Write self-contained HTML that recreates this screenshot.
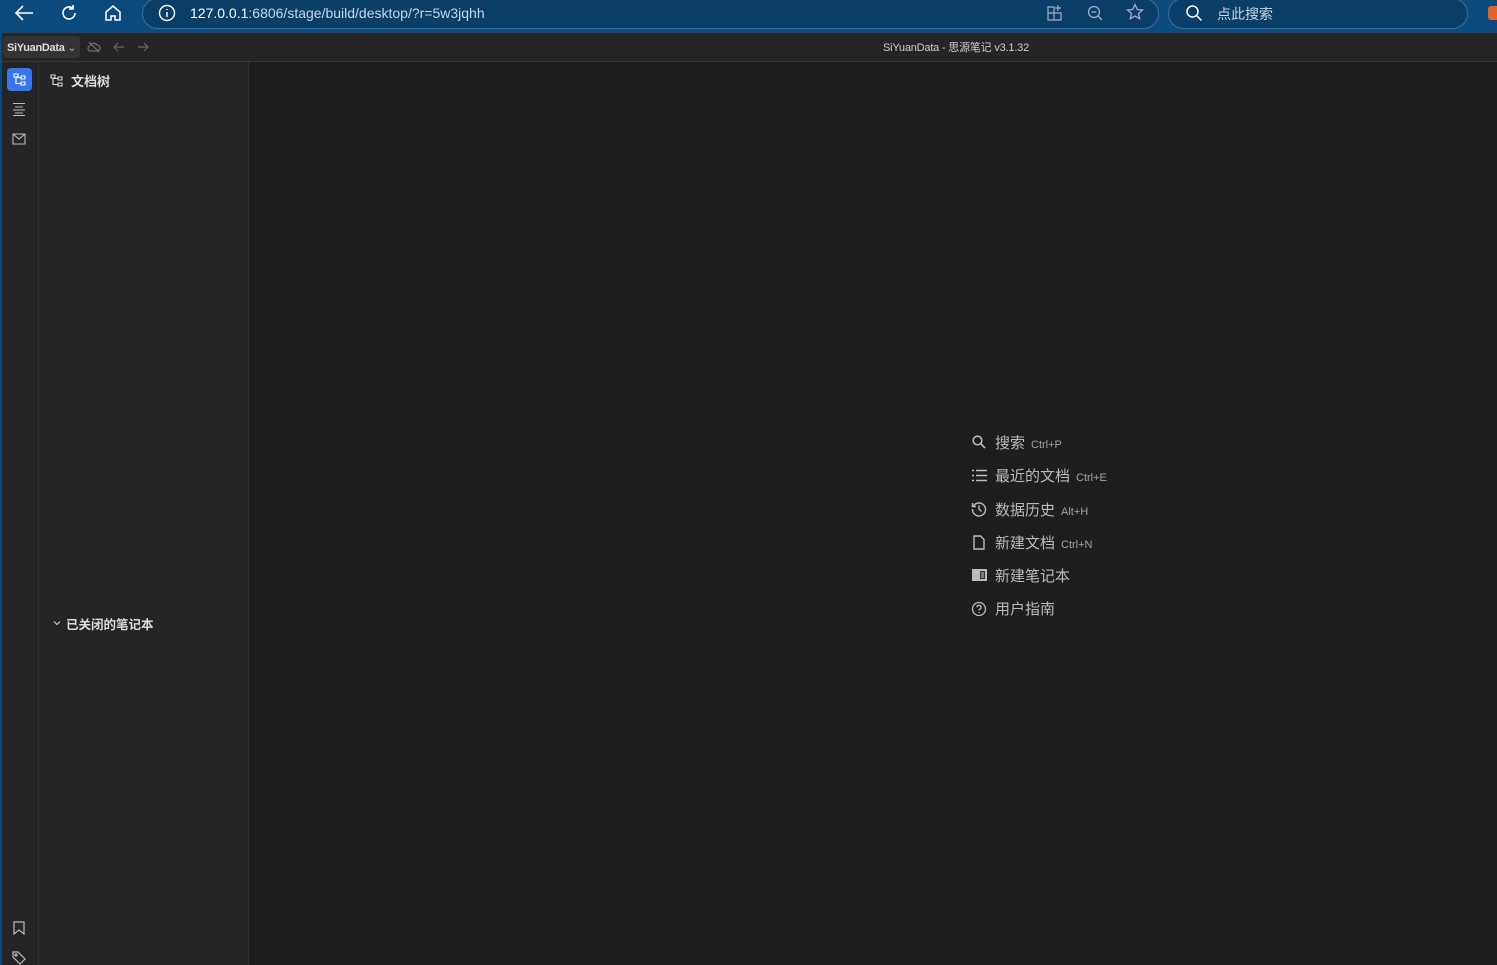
<!DOCTYPE html><html><head><meta charset="utf-8"><style>
*{box-sizing:border-box;margin:0;padding:0}
body{width:1497px;height:965px;overflow:hidden;background:#1e1e1e;font-family:"Liberation Sans","Noto Sans CJK SC",sans-serif;position:relative}
.abs{position:absolute}
.chrome{left:0;top:0;width:1497px;height:33px;background:#0b4a7c}
.url{left:142px;top:-2px;width:1017px;height:31px;border:1px solid #3a6f9a;border-radius:16px;background:#093e68}
.srch{left:1168px;top:-2px;width:300px;height:31px;border:1px solid #3a6f9a;border-radius:16px;background:#093e68}
.tb{left:0;top:33px;width:1497px;height:29px;background:#252525;border-bottom:1px solid #3a3a3a;border-left:2px solid #0b4a7c}
.dock{left:0;top:62px;width:39px;height:903px;background:#252525;border-left:2px solid #0b4a7c;border-right:1px solid #333}
.tree{left:39px;top:62px;width:210px;height:903px;background:#252525;border-right:1px solid #333}
.t{color:#ddd;font-size:12px;white-space:nowrap}
.m{color:#b8babd;font-size:15px;white-space:nowrap}
.k{color:#a0a2a5;font-size:11px;margin-left:6px}
svg{position:absolute}
</style></head><body>
<div class="abs chrome"></div>
<svg style="left:13px;top:4px" width="22" height="18" viewBox="0 0 22 18" fill="none" stroke="#fff" stroke-width="1.6"><path d="M20 9H3M10 2 3 9l7 7"/></svg>
<svg style="left:59px;top:3px" width="20" height="20" viewBox="0 0 20 20" fill="none" stroke="#fff" stroke-width="1.6"><path d="M16 10a6 6 0 1 1-2-4.5M14 2v4h-4"/></svg>
<svg style="left:103px;top:3px" width="20" height="20" viewBox="0 0 20 20" fill="none" stroke="#fff" stroke-width="1.5"><path d="M3 9 10 3l7 6v8h-5v-4H8v4H3z"/></svg>
<div class="abs url"></div>
<svg style="left:158px;top:4px" width="18" height="18" viewBox="0 0 18 18" fill="none" stroke="#fff" stroke-width="1.4"><circle cx="9" cy="9" r="7.5"/><path d="M9 8v5M9 5v1"/></svg>
<div class="abs" style="left:190px;top:5px;font-size:14px;color:#fff">127.0.0.1<span style="color:#c9d6e2">:6806/stage/build/desktop/?r=5w3jqhh</span></div>
<svg style="left:1046px;top:4px" width="18" height="18" viewBox="0 0 18 18" fill="none" stroke="#aac" stroke-width="1.2"><path d="M2 3h6v13H2zM2 9h13v7H8M12 1v6M9 4h6"/></svg>
<svg style="left:1086px;top:4px" width="18" height="18" viewBox="0 0 18 18" fill="none" stroke="#aac" stroke-width="1.3"><circle cx="8" cy="8" r="5.5"/><path d="M12 12l4 4M5.5 8h5"/></svg>
<svg style="left:1126px;top:3px" width="18" height="18" viewBox="0 0 18 18" fill="none" stroke="#aac" stroke-width="1.3"><path d="M9 1.5l2.3 5 5.2.5-4 3.5 1.2 5.2L9 13l-4.7 2.7 1.2-5.2-4-3.5 5.2-.5z"/></svg>
<div class="abs srch"></div>
<svg style="left:1185px;top:4px" width="18" height="18" viewBox="0 0 18 18" fill="none" stroke="#fff" stroke-width="1.5"><circle cx="7.5" cy="7.5" r="5.5"/><path d="M11.5 11.5l5 5"/></svg>
<div class="abs" style="left:1217px;top:4px;font-size:14px;color:#c9d6e2">点此搜索</div>
<div class="abs" style="left:1488px;top:6px;width:9px;height:14px;background:#e5622a;border-radius:3px 0 0 3px"></div>
<div class="abs tb"></div>
<div class="abs" style="left:3px;top:36px;width:77px;height:22px;background:#333;border-radius:4px"></div>
<div class="abs t" style="left:7px;top:41px;font-size:11px;font-weight:bold;color:#ddd;letter-spacing:-0.3px">SiYuanData <span style="font-weight:normal;color:#aaa">⌄</span></div>
<svg style="left:87px;top:40px" width="14" height="14" viewBox="0 0 14 14" fill="none" stroke="#777" stroke-width="1.1"><path d="M4 11h6a3 3 0 0 0 0-6 4 4 0 0 0-7 1 2.5 2.5 0 0 0 1 5zM2 2l10 10"/></svg>
<svg style="left:112px;top:40px" width="14" height="14" viewBox="0 0 14 14" fill="none" stroke="#666" stroke-width="1.2"><path d="M12 7H2M6 3 2 7l4 4"/></svg>
<svg style="left:136px;top:40px" width="14" height="14" viewBox="0 0 14 14" fill="none" stroke="#666" stroke-width="1.2"><path d="M2 7h10M8 3l4 4-4 4"/></svg>
<div class="abs t" style="left:883px;top:39px;font-size:11px;color:#ccc;letter-spacing:-0.2px">SiYuanData - 思源笔记 v3.1.32</div>
<div class="abs dock"></div>
<div class="abs" style="left:7px;top:68px;width:25px;height:23px;background:#3575f0;border-radius:4px"></div>
<svg style="left:13px;top:73px" width="13" height="13" viewBox="0 0 13 13" fill="none" stroke="#fff" stroke-width="1.1"><path d="M1 1h4v3H1zM8 3h4v3H8zM8 9h4v3H8zM3 4v6.5h5M3 4.5h5"/></svg>
<svg style="left:12px;top:102px" width="14" height="14" viewBox="0 0 14 14" fill="none" stroke="#bbb" stroke-width="1.1"><path d="M1 1.5h12M3 5h8M1 8h12M3 11h8M1 13.5h12"/></svg>
<svg style="left:12px;top:133px" width="14" height="12" viewBox="0 0 14 12" fill="none" stroke="#bbb" stroke-width="1.1"><path d="M1 1h12v10H1zM1 1l6 5 6-5"/></svg>
<svg style="left:13px;top:921px" width="12" height="14" viewBox="0 0 12 14" fill="none" stroke="#bbb" stroke-width="1.2"><path d="M1 1h10v12L6 9l-5 4z"/></svg>
<svg style="left:12px;top:951px" width="14" height="14" viewBox="0 0 14 14" fill="none" stroke="#bbb" stroke-width="1.2"><path d="M1 1h5l7 7-5 5-7-7z"/><circle cx="4" cy="4" r="1"/></svg>
<div class="abs tree"></div>
<svg style="left:50px;top:74px" width="13" height="13" viewBox="0 0 13 13" fill="none" stroke="#ddd" stroke-width="1.1"><path d="M1 1h4v3H1zM8 3h4v3H8zM8 9h4v3H8zM3 4v6.5h5M3 4.5h5"/></svg>
<div class="abs t" style="left:71px;top:71px;font-size:13px;font-weight:bold">文档树</div>
<svg style="left:52px;top:618px" width="10" height="10" viewBox="0 0 10 10" fill="none" stroke="#ccc" stroke-width="1.1"><path d="M2 3.5l3 3 3-3"/></svg>
<div class="abs t" style="left:66px;top:614px;font-weight:bold;font-size:12.5px">已关闭的笔记本</div>
<svg style="left:972px;top:435px" width="14" height="14" viewBox="0 0 14 14" fill="none" stroke="#bbb" stroke-width="1.6"><circle cx="5.5" cy="5.5" r="4.3"/><path d="M8.8 8.8 13 13"/></svg>
<div class="abs m" style="left:995px;top:432px">搜索<span class="k">Ctrl+P</span></div>
<svg style="left:972px;top:469px" width="15" height="13" viewBox="0 0 15 13" fill="none" stroke="#bbb" stroke-width="1.4"><path d="M0 1.5h2M4 1.5h11M0 6.5h2M4 6.5h11M0 11.5h2M4 11.5h11"/></svg>
<div class="abs m" style="left:995px;top:465px">最近的文档<span class="k">Ctrl+E</span></div>
<svg style="left:971px;top:501px" width="16" height="16" viewBox="0 0 16 16" fill="none" stroke="#bbb" stroke-width="1.4"><path d="M2.5 5A6.5 6.5 0 1 1 1.5 8M1.5 2v3.5H5M8 4.5V8l2.5 2.5"/></svg>
<div class="abs m" style="left:995px;top:499px">数据历史<span class="k">Alt+H</span></div>
<svg style="left:973px;top:535px" width="12" height="15" viewBox="0 0 12 15" fill="none" stroke="#bbb" stroke-width="1.4"><path d="M1 1h6.5L11 4.5V14H1z"/></svg>
<div class="abs m" style="left:995px;top:532px">新建文档<span class="k">Ctrl+N</span></div>
<svg style="left:972px;top:569px" width="15" height="12" viewBox="0 0 15 12"><rect x="0" y="0" width="15" height="12" fill="#bbb"/><rect x="8" y="2" width="5" height="8" fill="#333"/><path d="M9 4h3M9 6h3M9 8h3" stroke="#bbb"/></svg>
<div class="abs m" style="left:995px;top:565px">新建笔记本</div>
<svg style="left:971px;top:601px" width="16" height="16" viewBox="0 0 16 16" fill="none" stroke="#bbb" stroke-width="1.3"><circle cx="8" cy="8" r="6.5"/><path d="M6 6.3a2 2 0 1 1 2.6 1.9c-.5.2-.6.6-.6 1.3M8 11v1"/></svg>
<div class="abs m" style="left:995px;top:598px">用户指南</div>
</body></html>
